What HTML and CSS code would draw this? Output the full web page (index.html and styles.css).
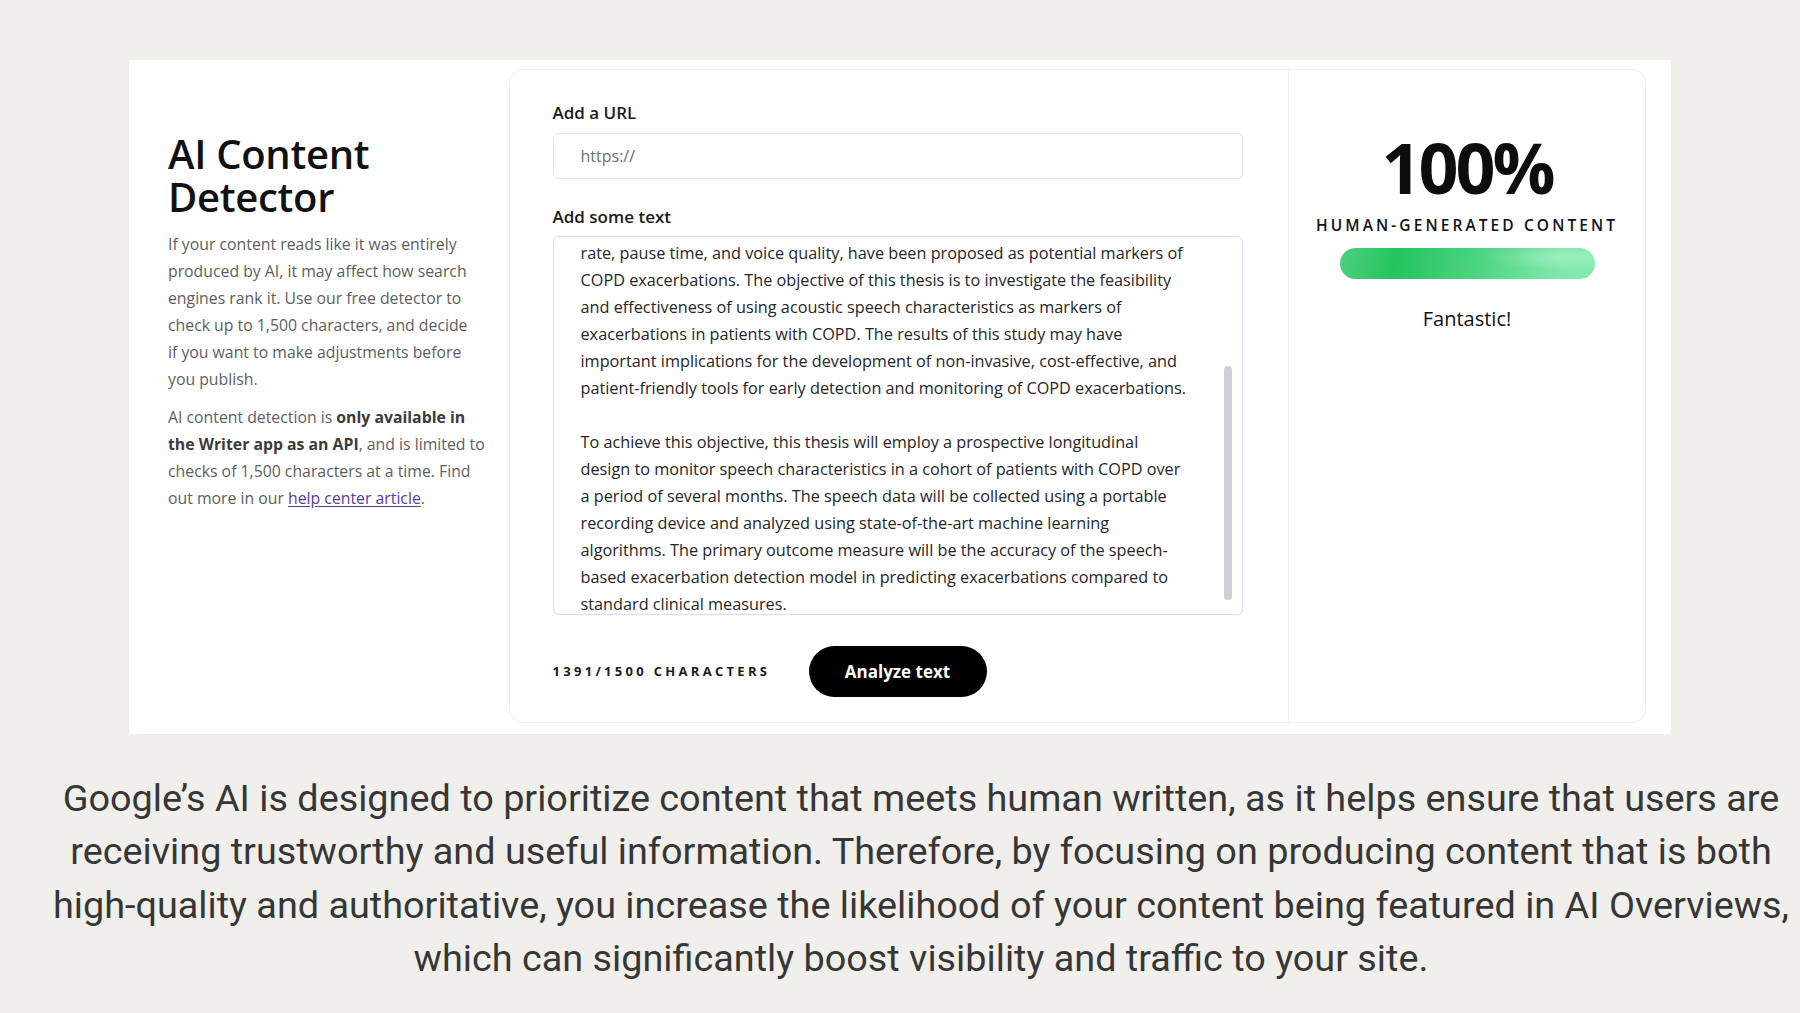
FILE: index.html
```html
<!DOCTYPE html>
<html lang="en">
<head>
<meta charset="utf-8">
<title>AI Content Detector</title>
<link rel="stylesheet" href="styles.css">
</head>
<body>
<div class="stage">
  <section class="panel">
    <div class="intro">
      <h1 class="title"><span class="title-line">AI Content</span><span class="title-line">Detector</span></h1>
      <p class="copy">If your content reads like it was entirely<br>produced by AI, it may affect how search<br>engines rank it. Use our free detector to<br>check up to 1,500 characters, and decide<br>if you want to make adjustments before<br>you publish.</p>
      <p class="copy">AI content detection is <strong>only available in<br>the Writer app as an API</strong>, and is limited to<br>checks of 1,500 characters at a time. Find<br>out more in our <a class="link" href="#">help center article</a>.</p>
    </div>
    <div class="card">
      <div class="form">
        <div class="field-label">Add a URL</div>
        <div class="url-input">https://</div>
        <div class="field-label field-label-second">Add some text</div>
        <div class="text-box">
          <div class="text-content">rate, pause time, and voice quality, have been proposed as potential markers of<br>COPD exacerbations. The objective of this thesis is to investigate the feasibility<br>and effectiveness of using acoustic speech characteristics as markers of<br>exacerbations in patients with COPD. The results of this study may have<br>important implications for the development of non-invasive, cost-effective, and<br>patient-friendly tools for early detection and monitoring of COPD exacerbations.<br><br>To achieve this objective, this thesis will employ a prospective longitudinal<br>design to monitor speech characteristics in a cohort of patients with COPD over<br>a period of several months. The speech data will be collected using a portable<br>recording device and analyzed using state-of-the-art machine learning<br>algorithms. The primary outcome measure will be the accuracy of the speech-<br>based exacerbation detection model in predicting exacerbations compared to<br>standard clinical measures.</div>
          <div class="scroll-thumb"></div>
        </div>
        <div class="actions">
          <span class="counter">1391/1500 CHARACTERS</span>
          <button class="analyze" type="button">Analyze text</button>
        </div>
      </div>
      <div class="result">
        <div class="pct">100%</div>
        <div class="pct-label">HUMAN-GENERATED CONTENT</div>
        <div class="bar"></div>
        <div class="verdict">Fantastic!</div>
      </div>
    </div>
  </section>
  <p class="caption">Google’s AI is designed to prioritize content that meets human written, as it helps ensure that users are<br>receiving trustworthy and useful information. Therefore, by focusing on producing content that is both<br>high-quality and authoritative, you increase the likelihood of your content being featured in AI Overviews,<br>which can significantly boost visibility and traffic to your site.</p>
</div>
</body>
</html>
```
FILE: styles.css
```css
* { box-sizing: border-box; }

html, body {
  margin: 0;
  padding: 0;
  background: #f1efec;
  width: 1800px;
  height: 1013px;
  overflow: hidden;
}

body {
  font-family: "Open Sans", "Liberation Sans", sans-serif;
}

.stage {
  padding-top: 60px;
}

.panel {
  margin-left: 129px;
  width: 1542px;
  height: 674px;
  background: #ffffff;
  display: flex;
  padding: 9px 25px 11px 0;
  box-shadow: 0 0 2px rgba(0, 0, 0, 0.03);
}

.intro {
  width: 380px;
  flex: none;
  padding: 64px 0 0 39px;
}

.title {
  margin: 0;
  font-family: "Open Sans", sans-serif;
  font-weight: 600;
  font-size: 40px;
  color: #111111;
  letter-spacing: -0.3px;
}

.title-line {
  display: block;
  height: 42.5px;
  line-height: 42.5px;
  white-space: nowrap;
}

.copy {
  margin: 13px 0 0;
  font-size: 15.8px;
  line-height: 27px;
  color: #5e5e5e;
  white-space: nowrap;
}

.copy + .copy {
  margin-top: 11px;
}

.copy strong {
  font-weight: 700;
  color: #3b3b3b;
}

.link {
  color: #5a3b9c;
  text-decoration: underline;
  text-underline-offset: 2px;
}

.card {
  flex: 1;
  display: flex;
  border: 1px solid #eceef3;
  border-radius: 14px;
  background: #ffffff;
}

.form {
  width: 778px;
  flex: none;
  padding: 31px 45px 0 42.5px;
  display: flex;
  flex-direction: column;
}

.field-label {
  font-size: 17px;
  font-weight: 600;
  line-height: 24px;
  color: #1a1a1a;
}

.field-label-second {
  margin-top: 26px;
}

.url-input {
  margin-top: 7.5px;
  height: 46px;
  border: 1px solid #e7e8ec;
  border-radius: 6px;
  padding-left: 27px;
  font-size: 16px;
  line-height: 44px;
  color: #6f6f6f;
}

.text-box {
  position: relative;
  margin-top: 7px;
  height: 379px;
  border: 1px solid #d9dbf3;
  border-radius: 6px;
  overflow: hidden;
}

.text-content {
  padding: 3px 0 0 27px;
  font-size: 16.25px;
  line-height: 27px;
  color: #262626;
  white-space: nowrap;
}

.scroll-thumb {
  position: absolute;
  right: 10px;
  top: 129px;
  width: 8px;
  height: 234px;
  border-radius: 4px;
  background: #cfd0d4;
}

.actions {
  margin-top: 31px;
  display: flex;
  align-items: center;
}

.counter {
  font-size: 13px;
  font-weight: 700;
  letter-spacing: 3.3px;
  color: #1a1a1a;
  width: 256px;
  flex: none;
}

.analyze {
  width: 178px;
  height: 51px;
  border: none;
  border-radius: 26px;
  background: #000000;
  color: #ffffff;
  font-family: "Open Sans", sans-serif;
  font-size: 17px;
  font-weight: 700;
  cursor: pointer;
}

.result {
  flex: 1;
  border-left: 1px solid #eef0f3;
  display: flex;
  flex-direction: column;
  align-items: center;
  padding-top: 62px;
}

.pct {
  font-size: 70px;
  font-weight: 700;
  line-height: 70px;
  letter-spacing: -3px;
  color: #0d0d0d;
}

.pct-label {
  margin-top: 12.5px;
  font-size: 15.5px;
  font-weight: 600;
  letter-spacing: 3.1px;
  line-height: 20px;
  color: #111111;
  white-space: nowrap;
}

.bar {
  margin-top: 13px;
  width: 255px;
  height: 31px;
  border-radius: 16px;
  background:
    radial-gradient(ellipse 40% 60% at 85% 30%, rgba(255, 255, 255, 0.25), rgba(255, 255, 255, 0) 70%),
    linear-gradient(100deg, #4fd07f 0%, #24c45e 22%, #4ed583 55%, #7de8a9 85%, #84ebaf 100%);
}

.verdict {
  margin-top: 27px;
  font-size: 20px;
  line-height: 26px;
  color: #111111;
}

.caption {
  margin: 38px 0 0;
  padding-left: 42px;
  text-align: center;
  font-family: Roboto, "Liberation Sans", sans-serif;
  font-size: 37.8px;
  line-height: 53.4px;
  color: #363636;
  white-space: nowrap;
}
```
